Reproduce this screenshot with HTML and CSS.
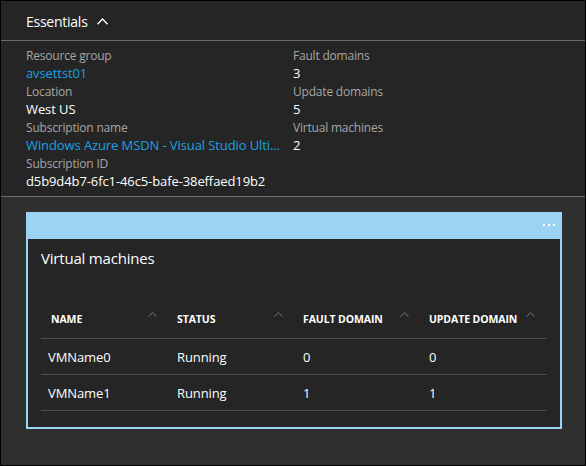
FILE: index.html
```html
<!DOCTYPE html>
<html>
<head>
<meta charset="utf-8">
<link rel="stylesheet" href="styles.css">
</head>
<body>
<div class="blade">
  <div class="ess-header">
    <span class="ess-title">Essentials</span>
    <svg class="ess-chev" width="11" height="7" viewBox="0 0 11 7"><path d="M0.5 6.3 L5.5 1 L10.5 6.3" fill="none" stroke="#fff" stroke-width="1.3"/></svg>
  </div>
  <div class="ess-body">
    <div class="ess-col">
      <div class="prop"><div class="label">Resource group</div><div class="value link">avsettst01</div></div>
      <div class="prop"><div class="label">Location</div><div class="value">West US</div></div>
      <div class="prop"><div class="label">Subscription name</div><div class="value link">Windows Azure MSDN - Visual Studio Ulti...</div></div>
      <div class="prop"><div class="label">Subscription ID</div><div class="value">d5b9d4b7-6fc1-46c5-bafe-38effaed19b2</div></div>
    </div>
    <div class="ess-col">
      <div class="prop"><div class="label">Fault domains</div><div class="value">3</div></div>
      <div class="prop"><div class="label">Update domains</div><div class="value">5</div></div>
      <div class="prop"><div class="label">Virtual machines</div><div class="value">2</div></div>
    </div>
  </div>
  <div class="lens">
    <div class="tile">
      <div class="tile-bar">
        <div class="dots"><span></span><span></span><span></span></div>
      </div>
      <div class="tile-content">
        <div class="tile-title">Virtual machines</div>
        <div class="grid">
          <div class="row head">
            <div class="cell th">NAME<svg class="sort" width="9" height="5" viewBox="0 0 9 5"><path d="M0.5 4.6 L4.5 0.7 L8.5 4.6" fill="none" stroke="#7a7a7a" stroke-width="1"/></svg></div>
            <div class="cell th">STATUS<svg class="sort" width="9" height="5" viewBox="0 0 9 5"><path d="M0.5 4.6 L4.5 0.7 L8.5 4.6" fill="none" stroke="#7a7a7a" stroke-width="1"/></svg></div>
            <div class="cell th">FAULT DOMAIN<svg class="sort" width="9" height="5" viewBox="0 0 9 5"><path d="M0.5 4.6 L4.5 0.7 L8.5 4.6" fill="none" stroke="#7a7a7a" stroke-width="1"/></svg></div>
            <div class="cell th">UPDATE DOMAIN<svg class="sort" width="9" height="5" viewBox="0 0 9 5"><path d="M0.5 4.6 L4.5 0.7 L8.5 4.6" fill="none" stroke="#7a7a7a" stroke-width="1"/></svg></div>
          </div>
          <div class="row">
            <div class="cell first">VMName0</div>
            <div class="cell">Running</div>
            <div class="cell">0</div>
            <div class="cell">0</div>
          </div>
          <div class="row">
            <div class="cell first">VMName1</div>
            <div class="cell">Running</div>
            <div class="cell">1</div>
            <div class="cell">1</div>
          </div>
        </div>
      </div>
    </div>
  </div>
</div>
</body>
</html>
```

FILE: styles.css
```css
* { box-sizing: border-box; }
html, body { margin: 0; padding: 0; background: #000; }
body { font-family: "Open Sans", "Noto Sans", sans-serif; color: #fff; }

.blade {
  width: 586px;
  height: 466px;
  border: 1px solid #000;
  background: #252525;
  display: flex;
  flex-direction: column;
}

.ess-header {
  height: 40px;
  flex: none;
  display: flex;
  align-items: center;
  padding: 2px 0 0 25px;
  border-bottom: 1px solid #6b6b6b;
}
.ess-title { font-size: 14px; letter-spacing: -0.25px; }
.ess-chev { margin-left: 9px; margin-top: -1px; }

.ess-body {
  height: 156px;
  flex: none;
  display: grid;
  grid-template-columns: 267px 1fr;
  padding: 7px 0 0 25px;
  border-bottom: 1px solid #6b6b6b;
}
.ess-col { display: flex; flex-direction: column; gap: 2px; min-width: 0; }
.prop { min-width: 0; }
.label { font-size: 12px; line-height: 16px; color: #a6a6a6; letter-spacing: -0.2px; }
.value { font-size: 13px; line-height: 18px; color: #fff; white-space: nowrap; letter-spacing: -0.1px; }
.link { color: #1ba1e2; }

.lens {
  flex: 1;
  background: #2f2f2f;
  padding: 15px 23px 0 25px;
}
.tile {
  height: 217px;
  background: #9ad4f2;
  padding: 0 2px 2px 2px;
  display: flex;
  flex-direction: column;
}
.tile-bar {
  height: 27px;
  flex: none;
  display: flex;
  justify-content: flex-end;
  align-items: center;
  padding-right: 5px;
}
.dots { display: flex; gap: 3px; margin-top: -2px; }
.dots span { width: 2px; height: 2px; background: #fff; }

.tile-content {
  flex: 1;
  background: #252525;
  padding: 9px 13px 0 13px;
}
.tile-title { font-size: 15px; line-height: 20px; letter-spacing: -0.2px; }

.grid { margin-top: 30px; }
.row {
  display: grid;
  grid-template-columns: repeat(4, 126px);
  height: 36px;
  border-bottom: 1px solid #4e4e4e;
  align-items: center;
}
.row.head { height: 41px; padding-top: 1px; }
.cell { font-size: 13px; padding-left: 10px; position: relative; letter-spacing: -0.1px; }
.cell.first { padding-left: 7px; }
.th { font-size: 10.5px; font-weight: 700; }
.sort { position: absolute; right: 10px; top: 0; }
```
